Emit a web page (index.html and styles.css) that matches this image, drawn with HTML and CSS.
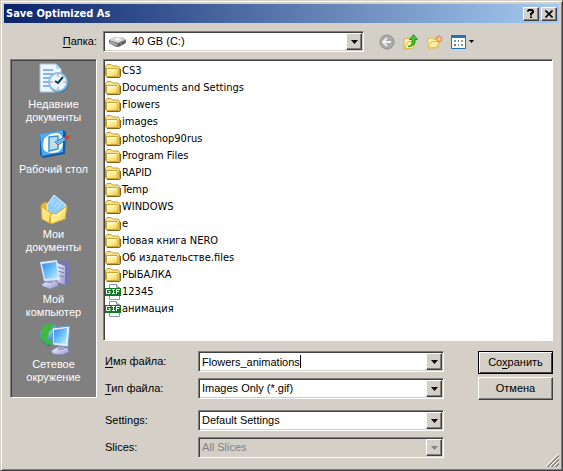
FILE: index.html
```html
<!DOCTYPE html>
<html lang="ru">
<head>
<meta charset="utf-8">
<title>Save Optimized As</title>
<link rel="stylesheet" href="styles.css">
</head>
<body>
<svg class="defs" aria-hidden="true">
  <defs>
    <linearGradient id="gold" x1="0" y1="0" x2="1" y2="1"><stop offset="0" stop-color="#fffbd0"/><stop offset=".5" stop-color="#ffee94"/><stop offset="1" stop-color="#efc248"/></linearGradient>
    <linearGradient id="screen" x1="0" y1="0" x2="1" y2="1"><stop offset="0" stop-color="#2c8cf0"/><stop offset=".6" stop-color="#7cc9fb"/><stop offset="1" stop-color="#c4f0ff"/></linearGradient>
    <linearGradient id="metal" x1="0" y1="0" x2="1" y2="1"><stop offset="0" stop-color="#f4f4ff"/><stop offset="1" stop-color="#9696cc"/></linearGradient>
    <radialGradient id="globe" cx=".4" cy=".3" r=".8"><stop offset="0" stop-color="#8edcff"/><stop offset="1" stop-color="#1552b8"/></radialGradient>
    <symbol id="folder" viewBox="0 0 16 16">
      <path d="M.5 12V3.500L2 1.500h4L7.500 3H13l1.500 1.500V13l-1 1h-12z" fill="#fbe58a" stroke="#c29c35"/>
      <path d="M1.500 5.500h10.500q1 0 1 1v7H2.500l-1-1z" fill="url(#gold)" stroke="#cfa437"/>
      <path d="M2.500 11V6.500H11" fill="none" stroke="#fffce0"/>
      <path d="M2 14.500h12q1.500 0 1.500-1.500V6" fill="none" stroke="#86661c"/>
    </symbol>
    <symbol id="gif" viewBox="0 0 16 16">
      <path d="M4.500 .5h7l3 3v12h-10z" fill="#fff" stroke="#8b9a9c"/>
      <path d="M11.500 .5v3h3" fill="#dde" stroke="#8b9a9c"/>
      <path d="M0 4h16v8H0z" fill="#127a22"/>
      <path d="M5.500 5.500h-4v4h3.500V7.500H3.500M7 5.500h3M8.500 5.500v4M7 9.500h3M11.500 10V5.500H15M12 7.500h2" fill="none" stroke="#fff"/>
    </symbol>
    <symbol id="arrow" viewBox="0 0 7 4"><path d="M0 0h7L3.500 4z" fill="currentColor"/></symbol>
  </defs>
</svg>
<main class="window">
  <header class="titlebar">
    <h1>Save Optimized As</h1>
    <button class="caption" aria-label="Help"><svg width="8" height="9" viewBox="0 0 8 9"><path d="M1 2.500V2l1-1h3l1 1v1L4 5v1.500M4 7.500V9" fill="none" stroke="#000" stroke-width="2"/></svg></button>
    <button class="caption" aria-label="Close"><svg width="8" height="8" viewBox="0 0 8 8"><path d="M.5 .5l7 7M7.500 .5l-7 7" stroke="#000" stroke-width="1.600"/></svg></button>
  </header>
  <form class="dialog">
    <label class="folder-label" for="folder-select"><u>П</u>апка:</label>
    <div class="topline">
      <div class="combo folder-combo">
        <svg class="drive" width="17" height="11" viewBox="0 0 17 11"><path d="M0 4L6 1h7l4 3v3l-7 4H7L0 7z" fill="#777"/><path d="M0 4l6-3h7l3 3-7 3z" fill="#d5d5d5"/><path d="M1 5l7 3v2L1 7z" fill="#aaa"/><path d="M9 8l7-3v2l-7 3z" fill="#555"/><path d="M5 3l4-1 3 1-3 2z" fill="#f6f6f6"/><path d="M11 8l2-1" stroke="#4c4"/></svg>
        <select id="folder-select"><option>40 GB (C:)</option></select>
        <span class="drop"><svg width="7" height="4"><use href="#arrow"/></svg></span>
      </div>
      <div class="toolbar">
        <button type="button" aria-label="Back"><svg width="16" height="16" viewBox="0 0 16 16"><circle cx="8" cy="8" r="7" fill="#aaa" stroke="#8e8e8e"/><path d="M8 4L4 8l4 4M4.500 8H12" fill="none" stroke="#eee" stroke-width="2"/></svg></button>
        <button type="button" aria-label="Up"><svg width="16" height="16" viewBox="0 0 16 16"><path d="M1 15V5l4-1 1 1 5-1v9L3 15z" fill="url(#gold)" stroke="#d0b04a"/><path d="M1.500 15l3-7 8-1-2 7z" fill="#fff3a8" stroke="#d8b850"/><path d="M5 12.500q5-1 4-7H6.500l4-5 4 5H12q1 7-7 7z" fill="#42c736" stroke="#14801a" stroke-width=".8"/></svg></button>
        <button type="button" aria-label="New folder"><svg width="16" height="16" viewBox="0 0 16 16"><path d="M1 14V5l4-1 1 1h5v9z" fill="url(#gold)" stroke="#e0bf58"/><path d="M1 14l3-6 9-1-3 6z" fill="#fff2a8" stroke="#e0bf58"/><path d="M12 1v8M8 5h8M9 2l6 6M15 2L9 8" stroke="#f07438"/><circle cx="12" cy="5" r="1.500" fill="#ffd390"/></svg></button>
        <button type="button" class="views" aria-label="Views"><svg width="15" height="14" viewBox="0 0 15 14"><path d="M.5 .5h14v13H.5z" fill="#fff" stroke="#2272bd"/><path d="M0 0h15v3H0z" fill="#2272bd"/><path d="M3 5h2v2H3zM10 9h2v2h-2z" fill="#6a9bd0"/><path d="M7 5h1v2H7zM3 9h2v2H3z" fill="#4a8d7d"/><path d="M10 5h2v2h-2zM7 9h1v2H7z" fill="#d08a60"/></svg><svg width="5" height="3" viewBox="0 0 7 4"><use href="#arrow"/></svg></button>
      </div>
    </div>
    <nav class="places">
      <button type="button"><svg viewBox="0 0 32 32"><path d="M2 1h16l5 5v23H2z" fill="#eef7ff" stroke="#a4c5e8"/><path d="M18 1v5h5" fill="#b8d8f4"/><path d="M5 7h10M5 11h12M5 15h8M5 19h7M5 23h8" stroke="#86b6e8" stroke-width="2"/><circle cx="21" cy="20" r="10" fill="#487494"/><circle cx="20" cy="19" r="9" fill="#e9f8ff" stroke="#89bede" stroke-width="2"/><path d="M20 11v3M20 24v3M12 19h3M25 19h3" stroke="#e08068"/><path d="M25 14l-5 6-3-2" fill="none" stroke="#173658" stroke-width="2"/></svg><span>Недавние документы</span></button>
      <button type="button"><svg viewBox="0 0 32 32"><path d="M2 6l23-4 3 2-1 22-22 4-3-3z" fill="#0f5ca8"/><path d="M2 6l23-4v22L4 28z" fill="#4fabf0"/><path d="M6 11q6-7 14-6 6 3 5 11-1 9-11 9-9 0-9-7z" fill="#fffbe0"/><path d="M11 9l9-1v13l-9 2z" fill="#b4e0fc" stroke="#3c90d8" stroke-width="1.500"/><path d="M15 18l2-4 3 3z" fill="#f2dcae"/><path d="M17 14l9-5 2 3-8 5z" fill="#74b8ec" stroke="#2370ac" stroke-width=".8"/><path d="M26 9l4-2 2 3-4 2z" fill="#d63f38"/></svg><span>Рабочий стол</span></button>
      <button type="button"><svg viewBox="0 0 32 32"><path d="M3 12l4-3 21 5v12l-15 5-9-5z" fill="#e6b63c"/><path d="M9 12l7-10 12 10-6 12-12-3z" fill="#8fcdfa" stroke="#e8f7ff"/><path d="M13 11l4-5M16 14l5-6M19 16l5-6" stroke="#c4e8ff"/><path d="M3 13l10 7-2 10-7-4z" fill="#ffe37a" stroke="#dca826"/><path d="M12 22l4-2 2 1 11-8-2 13-14 5z" fill="url(#gold)" stroke="#dca826"/></svg><span>Мои документы</span></button>
      <button type="button"><svg viewBox="0 0 32 32"><path d="M19 5l6-3 8 3v19l-7 4-7-4z" fill="#7777b5"/><path d="M19 5l8 3v19l-8-3z" fill="url(#metal)"/><path d="M20 9l6 2M20 13l6 2M20 17l6 2" stroke="#7777af"/><path d="M4 26l8-5 8 3v4l-8 3-8-3z" fill="url(#metal)" stroke="#8585ba"/><path d="M9 20h6v5H9z" fill="#9a9ac9"/><path d="M2 4l17-2 3 20-16 1z" fill="#d9e7fa"/><path d="M4 6l14-2 2 16-13 1z" fill="url(#screen)"/></svg><span>Мой компьютер</span></button>
      <button type="button"><svg viewBox="0 0 32 32"><circle cx="13" cy="12" r="11" fill="url(#globe)"/><path d="M4 5q5-5 12-4l-2 5-3 3-1 7 3 4-4 2-7-7zM12 17l4 2-2 4-5-3z" fill="#3eb842"/><path d="M13 28l6-4 11 1 1 4-7 3-9-1z" fill="url(#metal)" stroke="#8585ba"/><path d="M20 22h6v5h-6z" fill="#a4a4cd"/><path d="M14 5l18-2-2 21-15-2z" fill="#e3efff" stroke="#6a94bd"/><path d="M16 7l13-2-1 16-12-1z" fill="url(#screen)"/></svg><span>Сетевое окружение</span></button>
    </nav>
    <ul class="files">
      <li><svg><use href="#folder"/></svg>CS3</li>
      <li><svg><use href="#folder"/></svg>Documents and Settings</li>
      <li><svg><use href="#folder"/></svg>Flowers</li>
      <li><svg><use href="#folder"/></svg>images</li>
      <li><svg><use href="#folder"/></svg>photoshop90rus</li>
      <li><svg><use href="#folder"/></svg>Program Files</li>
      <li><svg><use href="#folder"/></svg>RAPID</li>
      <li><svg><use href="#folder"/></svg>Temp</li>
      <li><svg><use href="#folder"/></svg>WINDOWS</li>
      <li><svg><use href="#folder"/></svg>е</li>
      <li><svg><use href="#folder"/></svg>Новая книга NERO</li>
      <li><svg><use href="#folder"/></svg>Об издательстве.files</li>
      <li><svg><use href="#folder"/></svg>РЫБАЛКА</li>
      <li><svg><use href="#gif"/></svg>12345</li>
      <li><svg><use href="#gif"/></svg>анимация</li>
    </ul>
    <div class="bottom">
      <div class="fields">
        <label for="name"><u>И</u>мя файла:</label>
        <div class="combo"><div class="entry"><input id="name" value="Flowers_animations" size="18"><i class="caret"></i></div><span class="drop"><svg width="7" height="4"><use href="#arrow"/></svg></span></div>
        <label for="type"><u>Т</u>ип файла:</label>
        <div class="combo"><select id="type"><option>Images Only (*.gif)</option></select><span class="drop"><svg width="7" height="4"><use href="#arrow"/></svg></span></div>
        <label class="extra" for="settings">Settings:</label>
        <div class="combo extra"><select id="settings"><option>Default Settings</option></select><span class="drop"><svg width="7" height="4"><use href="#arrow"/></svg></span></div>
        <label for="slices">Slices:</label>
        <div class="combo disabled"><select id="slices" disabled><option>All Slices</option></select><span class="drop"><svg width="7" height="4"><use href="#arrow"/></svg></span></div>
      </div>
      <div class="actions">
        <button type="button" class="push default"><span>Со<u>х</u>ранить</span></button>
        <button type="button" class="push">Отмена</button>
      </div>
    </div>
  </form>
  <svg class="grip" width="13" height="13" viewBox="0 0 13 13"><path d="M0 12L12 0M4 12l8-8M8 12l4-4" stroke="#fff"/><path d="M1 13L13 1M2 13L13 2M5 13l8-8M6 13l7-7M9 13l4-4M10 13l3-3" stroke="#8a8781"/></svg>
</main>
</body>
</html>
```

FILE: styles.css
```css
* { box-sizing: border-box; }

body {
  margin: 0;
  background: #d4d0c8;
  color: #000;
  font: 11px/13px "Liberation Sans", Arial, sans-serif;
}

.defs { position: absolute; width: 0; height: 0; }

button, input, select { font: inherit; color: inherit; margin: 0; }

svg { display: block; flex: none; }

u { text-underline-offset: 2px; }

.window {
  position: relative;
  display: flex;
  flex-direction: column;
  min-height: 100vh;
  padding: 2px;
  border: 1px solid;
  border-color: #d4d0c8 #404040 #404040 #d4d0c8;
  box-shadow: inset 1px 1px #fff, inset -1px -1px #808080;
}

.titlebar {
  display: flex;
  align-items: center;
  height: 19px;
  margin: 1px 1px 0;
  padding: 0 2px;
  background: linear-gradient(90deg, #0a246a, #a6caf0);
}

.titlebar h1 {
  flex: 1;
  margin: 0;
  color: #fff;
  font: bold 11px/18px "DejaVu Sans Condensed", "DejaVu Sans", sans-serif;
}

.caption, .drop, .push {
  display: flex;
  align-items: center;
  justify-content: center;
  padding: 0;
  background: #d4d0c8;
  border: 1px solid;
  border-color: #fff #404040 #404040 #fff;
  box-shadow: inset -1px -1px #808080;
}

.caption { width: 16px; height: 14px; margin-left: 2px; }

.dialog {
  flex: 1;
  display: grid;
  grid-template-columns: 87px minmax(0, 1fr);
  grid-template-rows: 21px 1fr auto;
  column-gap: 6px;
  padding: 8px 7px 10px;
}

.folder-label { align-self: center; text-align: right; }

.topline { display: flex; gap: 15px; }

.combo {
  display: flex;
  align-items: center;
  height: 21px;
  padding: 1px;
  background: #fff;
  border: 1px solid;
  border-color: #808080 #fff #fff #808080;
  box-shadow: inset 1px 1px #404040, inset -1px -1px #d4d0c8;
}

.folder-combo { flex: 1; }
.drive { margin: 0 4px; }

.combo select, .combo input {
  appearance: none;
  min-width: 0;
  height: 17px;
  padding: 0 2px;
  background: none;
  border: 0;
  border-radius: 0;
  outline: 0;
}

.combo select { flex: 1; }

.entry { flex: 1; display: flex; align-items: center; }
.entry input { field-sizing: content; padding-right: 0; }
.caret { width: 1px; height: 13px; background: #000; }

.drop { width: 16px; height: 17px; pointer-events: none; }

.disabled { background: #d4d0c8; color: #808080; }
.disabled select { opacity: 1; }

.toolbar {
  display: flex;
  align-items: center;
  gap: 8px;
  width: 174px;
}

.toolbar button {
  display: flex;
  align-items: center;
  gap: 3px;
  padding: 0;
  background: none;
  border: 0;
}

.places, .files {
  margin-top: 7px;
  border: 1px solid;
  border-color: #808080 #fff #fff #808080;
  box-shadow: inset 1px 1px #404040;
}

.places {
  grid-row: 2 / 4;
  display: flex;
  flex-direction: column;
  margin-bottom: 60px;
  padding-top: 3px;
  background: #808080;
}

.places button {
  display: flex;
  flex-direction: column;
  align-items: center;
  gap: 3px;
  height: 65px;
  padding: 0 6px;
  background: none;
  border: 0;
  color: #fff;
}

.places svg { width: 32px; height: 32px; }

.files {
  margin-bottom: 0;
  padding: 2px 1px;
  list-style: none;
  background: #fff;
  font: 11px/17px "DejaVu Sans Condensed", "DejaVu Sans", sans-serif;
}

.files li { display: flex; align-items: center; gap: 1px; height: 17px; }
.files svg { width: 16px; height: 16px; }

.bottom {
  display: flex;
  gap: 34px;
  margin-top: 10px;
}

.fields {
  flex: 1;
  display: grid;
  grid-template-columns: 95px minmax(0, 1fr);
  row-gap: 6px;
  align-items: center;
}

.fields label { padding-left: 2px; }
.extra { margin-top: 5px; }

.actions { display: flex; flex-direction: column; gap: 3px; width: 75px; }

.push { height: 23px; }
.default { outline: 1px solid #000; outline-offset: -1px; border-color: #000; box-shadow: inset 1px 1px #fff, inset -1px -1px #404040; }

.grip { position: absolute; right: 3px; bottom: 3px; }
```
